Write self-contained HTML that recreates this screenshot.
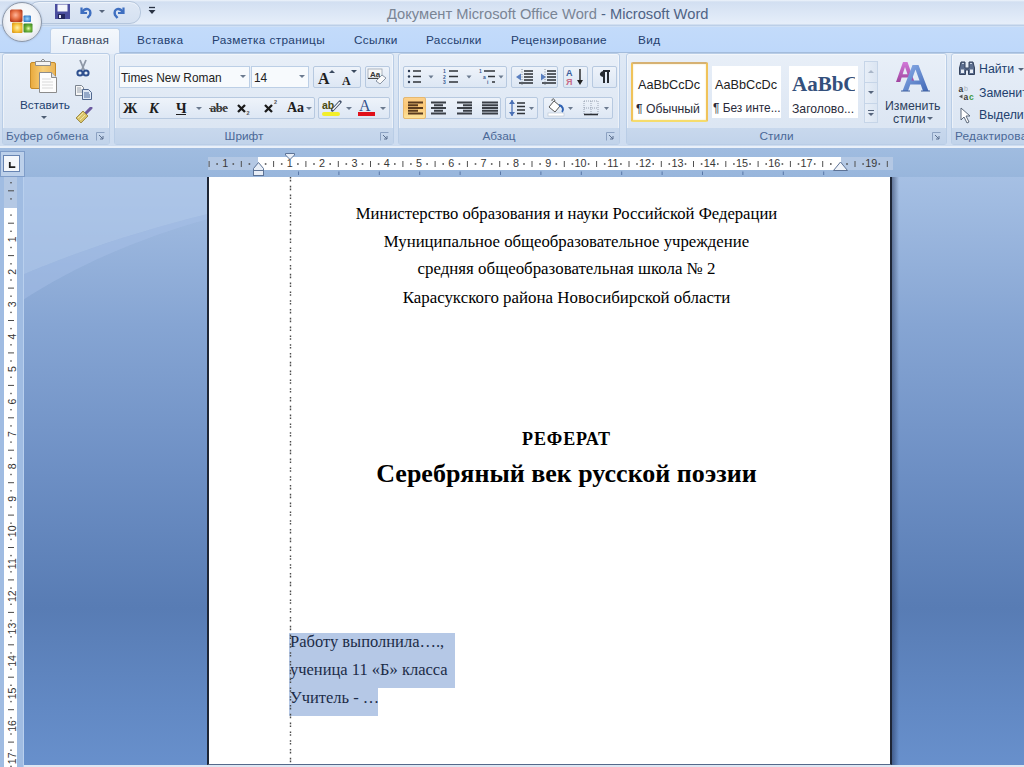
<!DOCTYPE html>
<html><head><meta charset="utf-8">
<style>
*{margin:0;padding:0;box-sizing:border-box}
html,body{width:1024px;height:767px;overflow:hidden;background:#6a8fc6}
body{position:relative;font-family:"Liberation Sans",sans-serif;font-size:12px;color:#15428b}
.a{position:absolute}
.t{position:absolute;white-space:nowrap;line-height:1}
/* title bar */
#title{left:0;top:0;width:1024px;height:26px;background:linear-gradient(#eef4fb 0,#d2dff1 2px,#d6e2f3 6px,#e4edf9 22px,#e6eef9 24px,#bccfe7 25px,#bccfe7 26px)}
#tabs{left:0;top:26px;width:1024px;height:27px;background:linear-gradient(#c3dbfa,#bed8fa);border-top:1px solid #cfe0f5;border-bottom:1px solid #a3bcdc}
#ribbon{left:0;top:53px;width:1024px;height:95px;background:linear-gradient(#dfe9f5,#cddcf0)}
.grp{position:absolute;top:53px;height:92px;border:1px solid #b9cde6;border-radius:3px;background:linear-gradient(#e8eff8 0%,#dfe8f4 60%,#d9e4f2 100%);box-shadow:inset 0 0 0 1px rgba(255,255,255,0.45)}
.lbl{position:absolute;left:0;right:0;bottom:0;height:16px;background:linear-gradient(#c8d8ed,#c1d3ea)}
.lbl span{position:absolute;top:3px;width:100%;text-align:center;color:#4a6897;font-size:11.8px;line-height:1}
.btn{position:absolute;border:1px solid #b7c9e0;border-radius:2px;background:linear-gradient(#eef3fa,#dde7f4)}
#rulerrow{left:0;top:148px;width:1024px;height:29px;background:linear-gradient(#a0bce0,#98b6dc)}
#doc{left:20px;top:177px;width:1004px;height:590px;background:linear-gradient(#a6c0e4 0%,#86a5d3 25%,#6d8fc4 50%,#587cb4 73%,#6289c4 90%,#6890cc 100%)}
#page{left:207px;top:177px;width:685px;height:588px;background:#fff;border-left:2px solid #1e2636;border-right:2px solid #1e2636;border-bottom:1px solid #55698a}
.serif{font-family:"Liberation Serif",serif;color:#000}
</style></head><body>
<div id="doc" class="a"></div>
<svg class="a" style="left:20px;top:177px" width="188" height="200" viewBox="20 177 188 200">
 <path d="M20 177 H208 V214 C150 228 80 250 20 276 Z" fill="#b2c9eb" opacity="0.6"/>
 <path d="M20 276 C80 250 150 228 208 214 V219 C150 235 80 262 20 302 Z" fill="#a8c2e8" opacity="0.45"/>
</svg>
<div class="a" style="left:892px;top:177px;width:7px;height:588px;background:linear-gradient(90deg,rgba(30,45,80,0.5),rgba(30,45,80,0))"></div>
<div class="a" style="left:0;top:765px;width:1024px;height:2px;background:#dde7f3"></div>

<div id="title" class="a"></div>
<div class="t" style="left:387px;top:7px;font-size:14.7px;color:#7a8595">Документ Microsoft Office Word <span style="color:#4f6385">- Microsoft Word</span></div>
<div id="tabs" class="a"></div>
<div id="ribbon" class="a"></div>

<!-- QAT -->
<div class="a" style="left:28px;top:1px;width:113px;height:23px;border-radius:11px;background:linear-gradient(#dfe8f5,#d5e1f1);border:1px solid #b5c6dc;box-shadow:inset 0 1px 0 #eef3fa"></div>
<svg class="a" style="left:54px;top:3px" width="17" height="17" viewBox="0 0 17 17">
 <path d="M1 1h15v15h-15z" fill="#4a4d9e"/>
 <rect x="3.5" y="1.5" width="10" height="7" fill="#f4f6fb"/>
 <rect x="4" y="11" width="7" height="5" fill="#23265e"/><rect x="5" y="12" width="2" height="3" fill="#e6e8f5"/>
</svg>
<svg class="a" style="left:78px;top:5px" width="15" height="14" viewBox="0 0 15 14">
 <path d="M3.5 2.5 v5.5 h5.5" fill="none" stroke="#3f6fc0" stroke-width="2.2"/>
 <path d="M4 7.5 C7 2 14 3 12 10 L9.5 13" fill="none" stroke="#3f6fc0" stroke-width="2.4"/>
</svg>
<svg class="a" style="left:99px;top:10px" width="6" height="4"><path d="M0 0h6l-3 3z" fill="#56657c"/></svg>
<svg class="a" style="left:112px;top:5px" width="15" height="14" viewBox="0 0 15 14">
 <path d="M11.5 2.5 v5.5 h-5.5" fill="none" stroke="#3f6fc0" stroke-width="2.2"/>
 <path d="M11 7.5 C8 2 1 3 3 10 L5.5 13" fill="none" stroke="#3f6fc0" stroke-width="2.4"/>
</svg>
<svg class="a" style="left:148px;top:6px" width="8" height="9"><path d="M1 1.5h6" stroke="#2a3344" stroke-width="1.3"/><path d="M0.5 4h7l-3.5 4z" fill="#2a3344"/></svg>

<!-- office button -->
<div class="a" style="left:2px;top:2px;width:40px;height:40px;border-radius:50%;background:radial-gradient(circle at 50% 45%,#ffffff 0%,#f2f4f8 55%,#d5dbe4 85%,#b8c1ce 100%);border:1.5px solid #8c97a8;box-shadow:0 0 2px #9eb4d4"></div>
<svg class="a" style="left:9px;top:9px" width="26" height="26" viewBox="0 0 26 26">
 <defs>
  <radialGradient id="or" cx="0.45" cy="0.45" r="0.6"><stop offset="0" stop-color="#ffb59a"/><stop offset="0.6" stop-color="#e36b3f"/><stop offset="1" stop-color="#b33a1e"/></radialGradient>
  <radialGradient id="oy" cx="0.5" cy="0.5" r="0.6"><stop offset="0" stop-color="#fff2b0"/><stop offset="0.6" stop-color="#f5c13a"/><stop offset="1" stop-color="#dc9a1a"/></radialGradient>
  <radialGradient id="og" cx="0.55" cy="0.55" r="0.6"><stop offset="0" stop-color="#e8ffb0"/><stop offset="0.5" stop-color="#6fb33a"/><stop offset="1" stop-color="#3f8a24"/></radialGradient>
  <radialGradient id="ob" cx="0.5" cy="0.5" r="0.6"><stop offset="0" stop-color="#9ad6ff"/><stop offset="1" stop-color="#2a71c0"/></radialGradient>
 </defs>
 <rect x="1" y="0.5" width="12.5" height="12.5" rx="1.5" fill="url(#or)"/>
 <rect x="14.5" y="6.5" width="7.5" height="6.5" rx="1" fill="url(#ob)"/>
 <rect x="3" y="13.5" width="10.5" height="10.5" rx="1" fill="url(#oy)"/>
 <rect x="14.5" y="14.5" width="9" height="9" rx="1" fill="url(#og)"/>
</svg>

<!-- tabs -->
<div class="a" style="left:50px;top:28px;width:70px;height:26px;border:1px solid #bcd0ea;border-bottom:none;border-radius:3px 3px 0 0;background:linear-gradient(#f4f8fc,#e8eff9)"></div>
<div class="t" style="left:62px;top:35px;font-size:11.8px;letter-spacing:0.35px;color:#34445c">Главная</div>
<div class="t" style="left:137px;top:35px;font-size:11.8px;letter-spacing:0.35px;color:#24406e">Вставка</div>
<div class="t" style="left:212px;top:35px;font-size:11.8px;letter-spacing:0.35px;color:#24406e">Разметка страницы</div>
<div class="t" style="left:354px;top:35px;font-size:11.8px;letter-spacing:0.35px;color:#24406e">Ссылки</div>
<div class="t" style="left:426px;top:35px;font-size:11.8px;letter-spacing:0.35px;color:#24406e">Рассылки</div>
<div class="t" style="left:511px;top:35px;font-size:11.8px;letter-spacing:0.35px;color:#24406e">Рецензирование</div>
<div class="t" style="left:638px;top:35px;font-size:11.8px;letter-spacing:0.35px;color:#24406e">Вид</div>

<!-- groups -->
<div class="grp" style="left:2px;width:108px"><div class="lbl"><span style="text-align:left;left:3px;letter-spacing:0.2px">Буфер обмена</span></div></div>
<div class="grp" style="left:114px;width:280px"><div class="lbl"><span style="width:auto;left:0;right:20px">Шрифт</span></div></div>
<div class="grp" style="left:398px;width:222px"><div class="lbl"><span style="width:auto;left:0;right:20px">Абзац</span></div></div>
<div class="grp" style="left:626px;width:321px"><div class="lbl"><span style="width:auto;left:0;right:20px">Стили</span></div></div>
<div class="grp" style="left:951px;width:80px"><div class="lbl"><span style="text-align:left;left:3px;letter-spacing:0.2px">Редактирование</span></div></div>


<!-- ===== Clipboard group contents ===== -->
<svg class="a" style="left:28px;top:58px" width="32" height="36" viewBox="0 0 32 36">
 <defs><linearGradient id="gb" x1="0" y1="0" x2="1" y2="0"><stop offset="0" stop-color="#e9a93c"/><stop offset="0.5" stop-color="#f7cf7a"/><stop offset="1" stop-color="#eab456"/></linearGradient></defs>
 <rect x="2.5" y="4.5" width="25" height="26" rx="1.5" fill="url(#gb)" stroke="#c58b2a" stroke-width="1"/>
 <path d="M7.5 3.5 h15 v4 h-15z" fill="#f4f4f4" stroke="#8f8f8f"/>
 <path d="M12.5 3.5 l2.5 -2.5 l2.5 2.5" fill="none" stroke="#8f8f8f"/>
 <path d="M11.5 14.5 h12 l5 5 v15 h-17z" fill="#fdfdfd" stroke="#8c8c8c"/>
 <path d="M23.5 14.5 v5 h5" fill="#e2e2e2" stroke="#8c8c8c"/>
 <path d="M14 21h9M14 24h11M14 27h11M14 30h11" stroke="#d9d9d9" stroke-width="1"/>
</svg>
<div class="t" style="left:20px;top:100px;font-size:11.8px;color:#22416f">Вставить</div>
<svg class="a" style="left:41px;top:116px" width="6" height="4"><path d="M0 0h6l-3 3z" fill="#4d5d73"/></svg>
<svg class="a" style="left:76px;top:59px" width="14" height="18" viewBox="0 0 14 18">
 <path d="M4 1 L8.2 11 M10 1 L5.8 11" stroke="#8d97a6" stroke-width="1.8"/>
 <circle cx="4" cy="14" r="2.6" fill="none" stroke="#2d4f8e" stroke-width="2"/>
 <circle cx="10" cy="14" r="2.6" fill="none" stroke="#2d4f8e" stroke-width="2"/>
</svg>
<svg class="a" style="left:74px;top:84px" width="19" height="16" viewBox="0 0 19 16">
 <path d="M1.5 1.5h6l2 2v8h-8z" fill="#f5f5f5" stroke="#7b8490"/>
 <path d="M3 4h4M3 6h5M3 8h5" stroke="#9aa4b0"/>
 <path d="M8.5 5.5h6l3 3v7h-9z" fill="#dfe8f5" stroke="#51688f"/>
 <path d="M10 9h5M10 11h6M10 13h6" stroke="#4b6a9d"/>
</svg>
<svg class="a" style="left:75px;top:107px" width="18" height="17" viewBox="0 0 18 17">
 <path d="M11 6 L16 1" stroke="#6c5aa0" stroke-width="3" stroke-linecap="round"/>
 <path d="M1 11 L8 4 L13 9 L6 16 Z" fill="#d9c46a" stroke="#8f7a2e" stroke-width="0.8"/>
 <path d="M3 11 L8 6 M5 13 L10 8" stroke="#f3e7a5" stroke-width="1"/>
</svg>
<svg class="a" style="left:96px;top:132px" width="9" height="9" viewBox="0 0 9 9"><path d="M0.5 8.5v-8h8" fill="none" stroke="#8ca2c2"/><path d="M3 3l4 4M7 4v3h-3" fill="none" stroke="#5a6f8e"/></svg>

<!-- ===== Font group contents ===== -->
<div class="a" style="left:119px;top:66px;width:131px;height:22px;background:#f7fafd;border:1px solid #bccfe6"></div>
<div class="t" style="left:121px;top:72.5px;font-size:11.9px;color:#222">Times New Roman</div>
<svg class="a" style="left:240px;top:75px" width="6" height="4"><path d="M0 0h6l-3 3z" fill="#6b7a8f"/></svg>
<div class="a" style="left:251px;top:66px;width:58px;height:22px;background:#f7fafd;border:1px solid #bccfe6"></div>
<div class="t" style="left:254px;top:72.5px;font-size:11.9px;color:#222">14</div>
<svg class="a" style="left:299px;top:75px" width="6" height="4"><path d="M0 0h6l-3 3z" fill="#6b7a8f"/></svg>
<div class="btn" style="left:313px;top:66px;width:48px;height:22px"></div>
<div class="t serif" style="left:318px;top:71px;font-size:16px;font-weight:bold;color:#202020">A</div>
<svg class="a" style="left:329px;top:70px" width="6" height="4"><path d="M0 3h6l-3-3z" fill="#3b4a5f"/></svg>
<div class="t serif" style="left:342px;top:75px;font-size:12px;font-weight:bold;color:#202020">A</div>
<svg class="a" style="left:351px;top:70px" width="6" height="4"><path d="M0 0h6l-3 3z" fill="#3b4a5f"/></svg>
<div class="btn" style="left:365px;top:66px;width:25px;height:22px"></div>
<svg class="a" style="left:367px;top:68px" width="20" height="18" viewBox="0 0 20 18">
 <rect x="1" y="1" width="14" height="9" fill="#f8f8f8" stroke="#9aa4b0" stroke-width="0.8"/>
 <text x="3" y="8.5" font-family="Liberation Sans" font-size="8" font-weight="bold" fill="#333">Aa</text>
 <path d="M1 10.5h12" stroke="#444"/>
 <path d="M9 13 L15 7 L19 10 L13 16 Z" fill="#fafafa" stroke="#8a95a5"/>
</svg>
<div class="btn" style="left:119px;top:97px;width:196px;height:22px"></div>
<div class="t serif" style="left:123px;top:101px;font-size:14.5px;font-weight:bold;color:#1e1e1e">Ж</div>
<div class="t serif" style="left:149px;top:101px;font-size:14.5px;font-weight:bold;font-style:italic;color:#1e1e1e">К</div>
<div class="t serif" style="left:176px;top:101px;font-size:14.5px;font-weight:bold;color:#1e1e1e">Ч</div>
<div class="a" style="left:176px;top:114px;width:10px;height:1px;background:#1e1e1e"></div>
<svg class="a" style="left:196px;top:107px" width="6" height="4"><path d="M0 0h6l-3 3z" fill="#6b7a8f"/></svg>
<div class="t serif" style="left:210px;top:102px;font-size:12.5px;font-weight:bold;color:#333;letter-spacing:-0.5px">abe</div>
<div class="a" style="left:209px;top:108px;width:19px;height:1px;background:#555"></div>
<svg class="a" style="left:236px;top:98px" width="44" height="20" viewBox="0 0 44 20">
 <path d="M2 7 L9 14 M9 7 L2 14" stroke="#1a1a1a" stroke-width="2.3"/>
 <text x="10.5" y="16.5" font-family="Liberation Sans" font-size="5.5" font-weight="bold" fill="#555">2</text>
 <path d="M29 7 L36 14 M36 7 L29 14" stroke="#1a1a1a" stroke-width="2.3"/>
 <text x="38" y="5.5" font-family="Liberation Sans" font-size="5.5" font-weight="bold" fill="#555">2</text>
</svg>
<div class="t serif" style="left:287px;top:101px;font-size:14px;font-weight:bold;color:#202020">Aa</div>
<svg class="a" style="left:306px;top:107px" width="6" height="4"><path d="M0 0h6l-3 3z" fill="#6b7a8f"/></svg>
<div class="btn" style="left:318px;top:97px;width:72px;height:22px"></div>
<div class="a" style="left:322px;top:112px;width:18px;height:4px;background:#f2ee2a;border-radius:2px"></div>
<div class="t" style="left:322px;top:100px;font-size:10.5px;font-weight:bold;color:#4a4a10">ab</div>
<svg class="a" style="left:330px;top:99px" width="12" height="14"><path d="M2.5 11 L10 3" stroke="#3d4c66" stroke-width="3.2" stroke-linecap="round"/><path d="M3 10.5 L9.5 3.5" stroke="#f4f7fb" stroke-width="1.4" stroke-linecap="round"/></svg>
<svg class="a" style="left:346px;top:107px" width="6" height="4"><path d="M0 0h6l-3 3z" fill="#6b7a8f"/></svg>
<div class="t serif" style="left:359px;top:98px;font-size:16px;color:#34528a">A</div>
<div class="a" style="left:358px;top:112px;width:17px;height:4px;background:#e0101a"></div>
<svg class="a" style="left:380px;top:107px" width="6" height="4"><path d="M0 0h6l-3 3z" fill="#6b7a8f"/></svg>
<svg class="a" style="left:380px;top:132px" width="9" height="9" viewBox="0 0 9 9"><path d="M0.5 8.5v-8h8" fill="none" stroke="#8ca2c2"/><path d="M3 3l4 4M7 4v3h-3" fill="none" stroke="#5a6f8e"/></svg>


<!-- ===== Paragraph group ===== -->
<div class="btn" style="left:403px;top:66px;width:104px;height:22px"></div>
<svg class="a" style="left:403px;top:66px" width="104" height="22" viewBox="0 0 104 22">
 <g fill="#2b3a52"><circle cx="6" cy="5" r="1.2"/><circle cx="6" cy="10.5" r="1.2"/><circle cx="6" cy="16" r="1.2"/></g>
 <g stroke="#2f3338" stroke-width="1.6"><path d="M10 5h8M10 10.5h8M10 16h8"/></g>
 <path d="M25.5 9.5h5l-2.5 3z" fill="#6b7a8f"/>
 <g fill="#3a5a92" font-family="Liberation Sans" font-size="5" font-weight="bold"><text x="40" y="7">1</text><text x="40" y="12.5">2</text><text x="40" y="18">3</text></g>
 <g stroke="#2f3338" stroke-width="1.6"><path d="M46 5h9M46 10.5h9M46 16h9"/></g>
 <path d="M63.5 9.5h5l-2.5 3z" fill="#6b7a8f"/>
 <g fill="#3a5a92" font-family="Liberation Sans" font-size="5" font-weight="bold"><text x="76" y="7">1</text><text x="80" y="12.5">a</text><text x="84" y="18">i</text></g>
 <g stroke="#2f3338" stroke-width="1.6"><path d="M81 5h11M85 10.5h7M89 16h3"/></g>
 <path d="M95.5 9.5h5l-2.5 3z" fill="#6b7a8f"/>
</svg>
<div class="btn" style="left:511px;top:66px;width:47px;height:22px"></div>
<svg class="a" style="left:511px;top:66px" width="47" height="22" viewBox="0 0 47 22">
 <g stroke="#2a2e33" stroke-width="1.5"><path d="M13 5h9M13 8h9M13 11h9M13 14h9M8 17h14"/><path d="M36 5h9M36 8h9M36 11h9M36 14h9M31 17h14"/></g>
 <path d="M5 11 L10 7.5 V14.5Z" fill="#5a7fc0"/>
 <path d="M35 11 L30 7.5 V14.5Z" fill="#5a7fc0"/>
 <path d="M11 3v17M34 3v17" stroke="#6a7380" stroke-width="0.8" stroke-dasharray="1 1.5"/>
</svg>
<div class="btn" style="left:563px;top:66px;width:25px;height:22px"></div>
<svg class="a" style="left:563px;top:66px" width="25" height="22" viewBox="0 0 25 22">
 <text x="3" y="10" font-family="Liberation Sans" font-size="9" font-weight="bold" fill="#3b5d9c">A</text>
 <text x="3" y="19" font-family="Liberation Sans" font-size="9" font-weight="bold" fill="#c86a86">Я</text>
 <path d="M17 3v14" stroke="#222" stroke-width="1.4"/><path d="M14 14 L17 19 L20 14Z" fill="#222"/>
</svg>
<div class="btn" style="left:592px;top:66px;width:25px;height:22px"></div>
<svg class="a" style="left:592px;top:66px" width="25" height="22" viewBox="0 0 25 22">
 <path d="M11 5 H18 M12 5 V17 M16 5 V17" stroke="#262a30" stroke-width="2"/>
 <path d="M12 5 C7 5 6 11 12 11Z" fill="#262a30"/>
</svg>

<div class="btn" style="left:403px;top:97px;width:98px;height:22px"></div>
<div class="a" style="left:403px;top:97px;width:23px;height:22px;border:1px solid #e6b870;border-radius:2px;background:linear-gradient(#fcd08a,#fbc775 45%,#fde39b 100%)"></div>
<svg class="a" style="left:403px;top:97px" width="98" height="22" viewBox="0 0 98 22">
 <g stroke="#5a3b1e" stroke-width="2"><path d="M5 5.5h15M5 8.3h10M5 11h15M5 13.7h10M5 16.5h15"/></g>
 <g stroke="#3a3f46" stroke-width="2"><path d="M28 5.5h15M31 8.3h9M28 11h15M31 13.7h9M28 16.5h15"/><path d="M54 5.5h15M60 8.3h9M54 11h15M60 13.7h9M54 16.5h15"/><path d="M79 5.5h16M79 8.3h16M79 11h16M79 13.7h16M79 16.5h16"/></g>
</svg>
<div class="btn" style="left:505px;top:97px;width:33px;height:22px"></div>
<svg class="a" style="left:505px;top:97px" width="33" height="22" viewBox="0 0 33 22">
 <path d="M7 3v16" stroke="#4a70b5" stroke-width="1.3"/><path d="M4 7 L7 3 L10 7Z M4 15 L7 19 L10 15Z" fill="#4a70b5"/>
 <g stroke="#2f3338" stroke-width="1.6"><path d="M12 6h8M12 9.5h8M12 13h8M12 16.5h8"/></g>
 <path d="M24 10h5l-2.5 3z" fill="#6b7a8f"/>
</svg>
<div class="btn" style="left:543px;top:97px;width:70px;height:22px"></div>
<svg class="a" style="left:543px;top:97px" width="70" height="22" viewBox="0 0 70 22">
 <path d="M6 10 L11 4 L17 9 L12 15Z" fill="#fff" stroke="#555" stroke-width="1"/>
 <path d="M16 8 C20 9 21 13 19 15" stroke="#2f62b3" stroke-width="2" fill="none"/>
 <path d="M12 4 C11 1 9 1 9 4" stroke="#555" fill="none"/>
 <rect x="5" y="16" width="16" height="3" fill="#fff" stroke="#b7c2cf" stroke-width="0.6"/>
 <path d="M25 10h5l-2.5 3z" fill="#6b7a8f"/>
 <g stroke="#8592a3" stroke-width="0.8" stroke-dasharray="1 1"><path d="M41 4h14M41 11h14M41 4v13M48 4v13M55 4v13"/></g>
 <path d="M41 17.5h14" stroke="#2a2e33" stroke-width="1.6"/>
 <path d="M61 10h5l-2.5 3z" fill="#6b7a8f"/>
</svg>
<svg class="a" style="left:606px;top:132px" width="9" height="9" viewBox="0 0 9 9"><path d="M0.5 8.5v-8h8" fill="none" stroke="#8ca2c2"/><path d="M3 3l4 4M7 4v3h-3" fill="none" stroke="#5a6f8e"/></svg>


<!-- ===== Styles group ===== -->
<div class="a" style="left:631px;top:62px;width:77px;height:60px;border:2px solid #f0c35a;border-top-color:#d6b172;border-bottom-color:#f6dc6c;border-radius:2px;background:#fff;box-shadow:inset 0 0 2px #f8e2a8"></div>
<div class="a" style="left:633px;top:64px;width:68px;height:50px;overflow:hidden">
<div class="t" style="left:5px;top:15px;font-size:12.7px;color:#222">AaBbCcDc</div>
<div class="t" style="left:3px;top:39px;font-size:12.2px;color:#2a2a3a">¶ Обычный</div>
</div>
<div class="a" style="left:712px;top:66px;width:69px;height:52px;background:#fff"></div>
<div class="a" style="left:712px;top:66px;width:68px;height:50px;overflow:hidden">
<div class="t" style="left:3px;top:13px;font-size:12.7px;color:#222">AaBbCcDc</div>
<div class="t" style="left:1px;top:37px;font-size:11.9px;color:#2a2a3a">¶ Без инте...</div>
</div>
<div class="a" style="left:789px;top:66px;width:69px;height:52px;background:#fff"></div>
<div class="a" style="left:789px;top:66px;width:66px;height:50px;overflow:hidden">
<div class="t serif" style="left:3px;top:8px;font-size:21px;font-weight:bold;color:#34507c">AaBbCc</div>
<div class="t" style="left:3px;top:37px;font-size:12.2px;color:#2a2a3a">Заголово...</div>
</div>
<div class="a" style="left:864px;top:61px;width:14px;height:62px;border:1px solid #c6d5e8;background:linear-gradient(90deg,#e7eef7,#dbe5f2)"></div>
<div class="a" style="left:864px;top:82px;width:14px;height:1px;background:#c6d5e8"></div>
<div class="a" style="left:864px;top:103px;width:14px;height:1px;background:#c6d5e8"></div>
<svg class="a" style="left:868px;top:70px" width="6" height="4"><path d="M0 3h6l-3-3z" fill="#a9b6c8"/></svg>
<svg class="a" style="left:868px;top:91px" width="6" height="4"><path d="M0 0h6l-3 3z" fill="#56657c"/></svg>
<svg class="a" style="left:868px;top:110px" width="6" height="7"><path d="M0 0.5h6" stroke="#56657c"/><path d="M0 3h6l-3 3z" fill="#56657c"/></svg>
<svg class="a" style="left:894px;top:60px" width="36" height="34" viewBox="894 60 36 34">
 <defs><linearGradient id="gm" x1="0" y1="0" x2="0" y2="1"><stop offset="0" stop-color="#d27ad8"/><stop offset="1" stop-color="#a0449f"/></linearGradient>
 <linearGradient id="gbl" x1="0" y1="0" x2="1" y2="1"><stop offset="0" stop-color="#8db0ea"/><stop offset="1" stop-color="#4168b5"/></linearGradient></defs>
 <path d="M896 82 L903 62 L907.5 62 L914.5 82 L910 82 L908.6 77.5 L901.6 77.5 L900.3 82 Z M902.6 74.3 L907.5 74.3 L905 67 Z" fill="url(#gm)" fill-rule="evenodd"/>
 <path d="M902.5 91 L912.5 65 L918.5 65 L928.5 91 L923 91 L920.7 84.5 L910.3 84.5 L908 91 Z M911.5 80.5 L919.5 80.5 L915.5 69.5 Z" fill="url(#gbl)" fill-rule="evenodd"/>
 <path d="M901 91h9M921 91h9" stroke="#3d5e9e" stroke-width="1"/>
</svg>
<div class="t" style="left:885px;top:100px;font-size:12.3px;color:#2c3e5c">Изменить</div>
<div class="t" style="left:893px;top:113px;font-size:12.3px;color:#2c3e5c">стили</div>
<svg class="a" style="left:927px;top:117px" width="6" height="4"><path d="M0 0h6l-3 3z" fill="#56657c"/></svg>
<svg class="a" style="left:932px;top:132px" width="9" height="9" viewBox="0 0 9 9"><path d="M0.5 8.5v-8h8" fill="none" stroke="#8ca2c2"/><path d="M3 3l4 4M7 4v3h-3" fill="none" stroke="#5a6f8e"/></svg>

<!-- ===== Editing group ===== -->
<svg class="a" style="left:958px;top:60px" width="18" height="16" viewBox="0 0 18 16">
 <path d="M1.5 8 L3 2 H7 V8 H11 V2 H15 L16.5 8 V14.5 H10.5 V10 H7.5 V14.5 H1.5Z" fill="#5d6f8f" stroke="#34425c" stroke-width="1"/>
 <rect x="3" y="9.5" width="3" height="3.5" fill="#e9eef6"/><rect x="12" y="9.5" width="3" height="3.5" fill="#e9eef6"/>
 <path d="M4 3.5h2M12 3.5h2" stroke="#c9d3e3"/>
</svg>
<div class="t" style="left:979px;top:63px;font-size:12.3px;color:#22406e">Найти</div>
<svg class="a" style="left:1018px;top:68px" width="6" height="4"><path d="M0 0h6l-3 3z" fill="#56657c"/></svg>
<svg class="a" style="left:958px;top:84px" width="20" height="17" viewBox="0 0 20 17">
 <text x="0.5" y="8" font-family="Liberation Sans" font-size="8.5" font-weight="bold" fill="#3a3a3a">a</text>
 <text x="6" y="7" font-family="Liberation Sans" font-size="7" fill="#a8b0bb">b</text>
 <text x="5.5" y="15.5" font-family="Liberation Sans" font-size="8.5" font-weight="bold" fill="#3a3a3a">a</text>
 <text x="11" y="15.5" font-family="Liberation Sans" font-size="8.5" font-weight="bold" fill="#3f9a3f">c</text>
 <path d="M1 12.5 l3.5-2 v4z" fill="#555"/>
</svg>
<div class="t" style="left:979px;top:87px;font-size:12.3px;color:#22406e">Заменить</div>
<svg class="a" style="left:960px;top:107px" width="12" height="17" viewBox="0 0 12 17">
 <path d="M1 1 L1 13 L4 10 L7 16 L9 15 L6 9 L10 9Z" fill="#fff" stroke="#4d5a6d" stroke-width="0.9"/>
</svg>
<div class="t" style="left:979px;top:109px;font-size:12.3px;color:#22406e">Выделить</div>

<div id="rulerrow" class="a"></div>
<!-- ===== Rulers ===== -->
<div class="a" style="left:0;top:146px;width:1024px;height:2px;background:#e9f0f9"></div>
<div class="a" style="left:0;top:151px;width:25px;height:26px;border:1px solid #7f9dc9;background:#bcd0ea"></div>
<div class="a" style="left:3px;top:155px;width:17px;height:17px;border:1px solid #6784b2;background:#f4f7fb"></div>
<svg class="a" style="left:8px;top:161px" width="8" height="8"><path d="M1.8 1v5.2h5.5" fill="none" stroke="#1e1e1e" stroke-width="1.8"/></svg>
<div class="a" style="left:208px;top:157px;width:682px;height:13px;background:#fff"></div>
<div class="a" style="left:208px;top:157px;width:50px;height:13px;background:#b4c8e4"></div>
<div class="a" style="left:841px;top:157px;width:52px;height:13px;background:#b4c8e4"></div>
<svg class="a" style="left:0;top:150px" width="1024" height="28" viewBox="0 0 1024 28">
<rect x="208.6" y="11" width="1" height="6" fill="#505050"/>
<rect x="216.3" y="13.2" width="1.6" height="1.6" fill="#505050"/>
<text x="225.2" y="17.3" text-anchor="middle" font-family="Liberation Sans" font-size="10.8" fill="#383838">1</text>
<rect x="232.5" y="13.2" width="1.6" height="1.6" fill="#505050"/>
<rect x="240.8" y="11" width="1" height="6" fill="#505050"/>
<rect x="248.6" y="13.2" width="1.6" height="1.6" fill="#505050"/>
<rect x="264.8" y="13.2" width="1.6" height="1.6" fill="#505050"/>
<rect x="273.1" y="11" width="1" height="6" fill="#505050"/>
<rect x="280.9" y="13.2" width="1.6" height="1.6" fill="#505050"/>
<text x="289.8" y="17.3" text-anchor="middle" font-family="Liberation Sans" font-size="10.8" fill="#383838">1</text>
<rect x="297.1" y="13.2" width="1.6" height="1.6" fill="#505050"/>
<rect x="305.4" y="11" width="1" height="6" fill="#505050"/>
<rect x="313.2" y="13.2" width="1.6" height="1.6" fill="#505050"/>
<text x="322.1" y="17.3" text-anchor="middle" font-family="Liberation Sans" font-size="10.8" fill="#383838">2</text>
<rect x="329.4" y="13.2" width="1.6" height="1.6" fill="#505050"/>
<rect x="337.8" y="11" width="1" height="6" fill="#505050"/>
<rect x="345.5" y="13.2" width="1.6" height="1.6" fill="#505050"/>
<text x="354.4" y="17.3" text-anchor="middle" font-family="Liberation Sans" font-size="10.8" fill="#383838">3</text>
<rect x="361.7" y="13.2" width="1.6" height="1.6" fill="#505050"/>
<rect x="370.0" y="11" width="1" height="6" fill="#505050"/>
<rect x="377.8" y="13.2" width="1.6" height="1.6" fill="#505050"/>
<text x="386.7" y="17.3" text-anchor="middle" font-family="Liberation Sans" font-size="10.8" fill="#383838">4</text>
<rect x="394.0" y="13.2" width="1.6" height="1.6" fill="#505050"/>
<rect x="402.4" y="11" width="1" height="6" fill="#505050"/>
<rect x="410.1" y="13.2" width="1.6" height="1.6" fill="#505050"/>
<text x="419.0" y="17.3" text-anchor="middle" font-family="Liberation Sans" font-size="10.8" fill="#383838">5</text>
<rect x="426.3" y="13.2" width="1.6" height="1.6" fill="#505050"/>
<rect x="434.6" y="11" width="1" height="6" fill="#505050"/>
<rect x="442.4" y="13.2" width="1.6" height="1.6" fill="#505050"/>
<text x="451.3" y="17.3" text-anchor="middle" font-family="Liberation Sans" font-size="10.8" fill="#383838">6</text>
<rect x="458.6" y="13.2" width="1.6" height="1.6" fill="#505050"/>
<rect x="466.9" y="11" width="1" height="6" fill="#505050"/>
<rect x="474.7" y="13.2" width="1.6" height="1.6" fill="#505050"/>
<text x="483.6" y="17.3" text-anchor="middle" font-family="Liberation Sans" font-size="10.8" fill="#383838">7</text>
<rect x="490.9" y="13.2" width="1.6" height="1.6" fill="#505050"/>
<rect x="499.2" y="11" width="1" height="6" fill="#505050"/>
<rect x="507.0" y="13.2" width="1.6" height="1.6" fill="#505050"/>
<text x="515.9" y="17.3" text-anchor="middle" font-family="Liberation Sans" font-size="10.8" fill="#383838">8</text>
<rect x="523.2" y="13.2" width="1.6" height="1.6" fill="#505050"/>
<rect x="531.5" y="11" width="1" height="6" fill="#505050"/>
<rect x="539.3" y="13.2" width="1.6" height="1.6" fill="#505050"/>
<text x="548.2" y="17.3" text-anchor="middle" font-family="Liberation Sans" font-size="10.8" fill="#383838">9</text>
<rect x="555.5" y="13.2" width="1.6" height="1.6" fill="#505050"/>
<rect x="563.8" y="11" width="1" height="6" fill="#505050"/>
<rect x="571.6" y="13.2" width="1.6" height="1.6" fill="#505050"/>
<text x="580.5" y="17.3" text-anchor="middle" font-family="Liberation Sans" font-size="10.8" fill="#383838">10</text>
<rect x="587.8" y="13.2" width="1.6" height="1.6" fill="#505050"/>
<rect x="596.1" y="11" width="1" height="6" fill="#505050"/>
<rect x="603.9" y="13.2" width="1.6" height="1.6" fill="#505050"/>
<text x="612.8" y="17.3" text-anchor="middle" font-family="Liberation Sans" font-size="10.8" fill="#383838">11</text>
<rect x="620.1" y="13.2" width="1.6" height="1.6" fill="#505050"/>
<rect x="628.5" y="11" width="1" height="6" fill="#505050"/>
<rect x="636.2" y="13.2" width="1.6" height="1.6" fill="#505050"/>
<text x="645.1" y="17.3" text-anchor="middle" font-family="Liberation Sans" font-size="10.8" fill="#383838">12</text>
<rect x="652.4" y="13.2" width="1.6" height="1.6" fill="#505050"/>
<rect x="660.8" y="11" width="1" height="6" fill="#505050"/>
<rect x="668.5" y="13.2" width="1.6" height="1.6" fill="#505050"/>
<text x="677.4" y="17.3" text-anchor="middle" font-family="Liberation Sans" font-size="10.8" fill="#383838">13</text>
<rect x="684.7" y="13.2" width="1.6" height="1.6" fill="#505050"/>
<rect x="693.0" y="11" width="1" height="6" fill="#505050"/>
<rect x="700.8" y="13.2" width="1.6" height="1.6" fill="#505050"/>
<text x="709.7" y="17.3" text-anchor="middle" font-family="Liberation Sans" font-size="10.8" fill="#383838">14</text>
<rect x="717.0" y="13.2" width="1.6" height="1.6" fill="#505050"/>
<rect x="725.3" y="11" width="1" height="6" fill="#505050"/>
<rect x="733.1" y="13.2" width="1.6" height="1.6" fill="#505050"/>
<text x="742.0" y="17.3" text-anchor="middle" font-family="Liberation Sans" font-size="10.8" fill="#383838">15</text>
<rect x="749.3" y="13.2" width="1.6" height="1.6" fill="#505050"/>
<rect x="757.6" y="11" width="1" height="6" fill="#505050"/>
<rect x="765.4" y="13.2" width="1.6" height="1.6" fill="#505050"/>
<text x="774.3" y="17.3" text-anchor="middle" font-family="Liberation Sans" font-size="10.8" fill="#383838">16</text>
<rect x="781.6" y="13.2" width="1.6" height="1.6" fill="#505050"/>
<rect x="789.9" y="11" width="1" height="6" fill="#505050"/>
<rect x="797.7" y="13.2" width="1.6" height="1.6" fill="#505050"/>
<text x="806.6" y="17.3" text-anchor="middle" font-family="Liberation Sans" font-size="10.8" fill="#383838">17</text>
<rect x="813.9" y="13.2" width="1.6" height="1.6" fill="#505050"/>
<rect x="822.2" y="11" width="1" height="6" fill="#505050"/>
<rect x="830.0" y="13.2" width="1.6" height="1.6" fill="#505050"/>
<rect x="846.2" y="13.2" width="1.6" height="1.6" fill="#505050"/>
<rect x="854.5" y="11" width="1" height="6" fill="#505050"/>
<rect x="862.3" y="13.2" width="1.6" height="1.6" fill="#505050"/>
<text x="871.2" y="17.3" text-anchor="middle" font-family="Liberation Sans" font-size="10.8" fill="#383838">19</text>
<rect x="878.5" y="13.2" width="1.6" height="1.6" fill="#505050"/>
<rect x="886.8" y="11" width="1" height="6" fill="#505050"/>
<rect x="298.0" y="21.5" width="1" height="3.5" fill="#5a78a8"/>
<rect x="338.4" y="21.5" width="1" height="3.5" fill="#5a78a8"/>
<rect x="378.8" y="21.5" width="1" height="3.5" fill="#5a78a8"/>
<rect x="419.2" y="21.5" width="1" height="3.5" fill="#5a78a8"/>
<rect x="459.6" y="21.5" width="1" height="3.5" fill="#5a78a8"/>
<rect x="500.0" y="21.5" width="1" height="3.5" fill="#5a78a8"/>
<rect x="540.4" y="21.5" width="1" height="3.5" fill="#5a78a8"/>
<rect x="580.8" y="21.5" width="1" height="3.5" fill="#5a78a8"/>
<rect x="621.2" y="21.5" width="1" height="3.5" fill="#5a78a8"/>
<rect x="661.6" y="21.5" width="1" height="3.5" fill="#5a78a8"/>
<rect x="702.0" y="21.5" width="1" height="3.5" fill="#5a78a8"/>
<rect x="742.4" y="21.5" width="1" height="3.5" fill="#5a78a8"/>
<rect x="782.8" y="21.5" width="1" height="3.5" fill="#5a78a8"/>
<rect x="823.2" y="21.5" width="1" height="3.5" fill="#5a78a8"/>
</svg>
<svg class="a" style="left:252px;top:161px" width="13" height="16" viewBox="0 0 13 16"><path d="M1.5 7.5 L6.5 1.5 L11.5 7.5 V9.5 H1.5Z" fill="#e8eef7" stroke="#5d7396"/><rect x="1.5" y="9.5" width="10" height="5" fill="#e8eef7" stroke="#5d7396"/></svg>
<svg class="a" style="left:284px;top:153px" width="12" height="8" viewBox="0 0 12 8"><path d="M1.5 0.5 H10.5 V2 L6 6.5 L1.5 2Z" fill="#e8eef7" stroke="#5d7396"/></svg>
<svg class="a" style="left:832px;top:160px" width="17" height="12" viewBox="0 0 17 12"><path d="M1.5 10.5 L8.5 2 L15.5 10.5Z" fill="#f2f5fa" stroke="#5d7396"/></svg>
<div class="a" style="left:0;top:177px;width:24px;height:590px;background:#a0bce2;border-right:1px solid #b9d0ee"></div>
<div class="a" style="left:4px;top:177px;width:13px;height:590px;background:#fff"></div>
<div class="a" style="left:4px;top:177px;width:13px;height:31px;background:#b4c8e4"></div>
<svg class="a" style="left:0;top:177px" width="21" height="590" viewBox="0 177 21 590">
<rect x="10.3" y="182.0" width="1.4" height="1.4" fill="#4a4a4a"/>
<rect x="8" y="190.3" width="6" height="1" fill="#4a4a4a"/>
<rect x="10.3" y="198.2" width="1.4" height="1.4" fill="#4a4a4a"/>
<rect x="10.3" y="214.4" width="1.4" height="1.4" fill="#4a4a4a"/>
<rect x="8" y="222.7" width="6" height="1" fill="#4a4a4a"/>
<rect x="10.3" y="230.6" width="1.4" height="1.4" fill="#4a4a4a"/>
<text x="0" y="0" transform="translate(15.5 239.4) rotate(-90)" text-anchor="middle" font-family="Liberation Sans" font-size="10.5" fill="#333">1</text>
<rect x="10.3" y="246.8" width="1.4" height="1.4" fill="#4a4a4a"/>
<rect x="8" y="255.1" width="6" height="1" fill="#4a4a4a"/>
<rect x="10.3" y="263.1" width="1.4" height="1.4" fill="#4a4a4a"/>
<text x="0" y="0" transform="translate(15.5 271.9) rotate(-90)" text-anchor="middle" font-family="Liberation Sans" font-size="10.5" fill="#333">2</text>
<rect x="10.3" y="279.3" width="1.4" height="1.4" fill="#4a4a4a"/>
<rect x="8" y="287.6" width="6" height="1" fill="#4a4a4a"/>
<rect x="10.3" y="295.5" width="1.4" height="1.4" fill="#4a4a4a"/>
<text x="0" y="0" transform="translate(15.5 304.3) rotate(-90)" text-anchor="middle" font-family="Liberation Sans" font-size="10.5" fill="#333">3</text>
<rect x="10.3" y="311.7" width="1.4" height="1.4" fill="#4a4a4a"/>
<rect x="8" y="320.0" width="6" height="1" fill="#4a4a4a"/>
<rect x="10.3" y="327.9" width="1.4" height="1.4" fill="#4a4a4a"/>
<text x="0" y="0" transform="translate(15.5 336.7) rotate(-90)" text-anchor="middle" font-family="Liberation Sans" font-size="10.5" fill="#333">4</text>
<rect x="10.3" y="344.1" width="1.4" height="1.4" fill="#4a4a4a"/>
<rect x="8" y="352.4" width="6" height="1" fill="#4a4a4a"/>
<rect x="10.3" y="360.3" width="1.4" height="1.4" fill="#4a4a4a"/>
<text x="0" y="0" transform="translate(15.5 369.1) rotate(-90)" text-anchor="middle" font-family="Liberation Sans" font-size="10.5" fill="#333">5</text>
<rect x="10.3" y="376.6" width="1.4" height="1.4" fill="#4a4a4a"/>
<rect x="8" y="384.9" width="6" height="1" fill="#4a4a4a"/>
<rect x="10.3" y="392.8" width="1.4" height="1.4" fill="#4a4a4a"/>
<text x="0" y="0" transform="translate(15.5 401.6) rotate(-90)" text-anchor="middle" font-family="Liberation Sans" font-size="10.5" fill="#333">6</text>
<rect x="10.3" y="409.0" width="1.4" height="1.4" fill="#4a4a4a"/>
<rect x="8" y="417.3" width="6" height="1" fill="#4a4a4a"/>
<rect x="10.3" y="425.2" width="1.4" height="1.4" fill="#4a4a4a"/>
<text x="0" y="0" transform="translate(15.5 434.0) rotate(-90)" text-anchor="middle" font-family="Liberation Sans" font-size="10.5" fill="#333">7</text>
<rect x="10.3" y="441.4" width="1.4" height="1.4" fill="#4a4a4a"/>
<rect x="8" y="449.7" width="6" height="1" fill="#4a4a4a"/>
<rect x="10.3" y="457.6" width="1.4" height="1.4" fill="#4a4a4a"/>
<text x="0" y="0" transform="translate(15.5 466.4) rotate(-90)" text-anchor="middle" font-family="Liberation Sans" font-size="10.5" fill="#333">8</text>
<rect x="10.3" y="473.8" width="1.4" height="1.4" fill="#4a4a4a"/>
<rect x="8" y="482.2" width="6" height="1" fill="#4a4a4a"/>
<rect x="10.3" y="490.1" width="1.4" height="1.4" fill="#4a4a4a"/>
<text x="0" y="0" transform="translate(15.5 498.9) rotate(-90)" text-anchor="middle" font-family="Liberation Sans" font-size="10.5" fill="#333">9</text>
<rect x="10.3" y="506.3" width="1.4" height="1.4" fill="#4a4a4a"/>
<rect x="8" y="514.6" width="6" height="1" fill="#4a4a4a"/>
<rect x="10.3" y="522.5" width="1.4" height="1.4" fill="#4a4a4a"/>
<text x="0" y="0" transform="translate(15.5 531.3) rotate(-90)" text-anchor="middle" font-family="Liberation Sans" font-size="10.5" fill="#333">10</text>
<rect x="10.3" y="538.7" width="1.4" height="1.4" fill="#4a4a4a"/>
<rect x="8" y="547.0" width="6" height="1" fill="#4a4a4a"/>
<rect x="10.3" y="554.9" width="1.4" height="1.4" fill="#4a4a4a"/>
<text x="0" y="0" transform="translate(15.5 563.7) rotate(-90)" text-anchor="middle" font-family="Liberation Sans" font-size="10.5" fill="#333">11</text>
<rect x="10.3" y="571.1" width="1.4" height="1.4" fill="#4a4a4a"/>
<rect x="8" y="579.4" width="6" height="1" fill="#4a4a4a"/>
<rect x="10.3" y="587.4" width="1.4" height="1.4" fill="#4a4a4a"/>
<text x="0" y="0" transform="translate(15.5 596.2) rotate(-90)" text-anchor="middle" font-family="Liberation Sans" font-size="10.5" fill="#333">12</text>
<rect x="10.3" y="603.6" width="1.4" height="1.4" fill="#4a4a4a"/>
<rect x="8" y="611.9" width="6" height="1" fill="#4a4a4a"/>
<rect x="10.3" y="619.8" width="1.4" height="1.4" fill="#4a4a4a"/>
<text x="0" y="0" transform="translate(15.5 628.6) rotate(-90)" text-anchor="middle" font-family="Liberation Sans" font-size="10.5" fill="#333">13</text>
<rect x="10.3" y="636.0" width="1.4" height="1.4" fill="#4a4a4a"/>
<rect x="8" y="644.3" width="6" height="1" fill="#4a4a4a"/>
<rect x="10.3" y="652.2" width="1.4" height="1.4" fill="#4a4a4a"/>
<text x="0" y="0" transform="translate(15.5 661.0) rotate(-90)" text-anchor="middle" font-family="Liberation Sans" font-size="10.5" fill="#333">14</text>
<rect x="10.3" y="668.4" width="1.4" height="1.4" fill="#4a4a4a"/>
<rect x="8" y="676.7" width="6" height="1" fill="#4a4a4a"/>
<rect x="10.3" y="684.6" width="1.4" height="1.4" fill="#4a4a4a"/>
<text x="0" y="0" transform="translate(15.5 693.5) rotate(-90)" text-anchor="middle" font-family="Liberation Sans" font-size="10.5" fill="#333">15</text>
<rect x="10.3" y="700.9" width="1.4" height="1.4" fill="#4a4a4a"/>
<rect x="8" y="709.2" width="6" height="1" fill="#4a4a4a"/>
<rect x="10.3" y="717.1" width="1.4" height="1.4" fill="#4a4a4a"/>
<text x="0" y="0" transform="translate(15.5 725.9) rotate(-90)" text-anchor="middle" font-family="Liberation Sans" font-size="10.5" fill="#333">16</text>
<rect x="10.3" y="733.3" width="1.4" height="1.4" fill="#4a4a4a"/>
<rect x="8" y="741.6" width="6" height="1" fill="#4a4a4a"/>
<rect x="10.3" y="749.5" width="1.4" height="1.4" fill="#4a4a4a"/>
<text x="0" y="0" transform="translate(15.5 758.3) rotate(-90)" text-anchor="middle" font-family="Liberation Sans" font-size="10.5" fill="#333">17</text>
<rect x="10.3" y="765.7" width="1.4" height="1.4" fill="#4a4a4a"/>
</svg>
<div id="page" class="a"></div>


<!-- document text -->
<div class="t serif" style="left:0;width:1133px;text-align:center;top:206px;font-size:16.65px">Министерство образования и науки Российской Федерации</div>
<div class="t serif" style="left:0;width:1133px;text-align:center;top:234px;font-size:16.75px">Муниципальное общеобразовательное учреждение</div>
<div class="t serif" style="left:0;width:1133px;text-align:center;top:261px;font-size:16.9px">средняя общеобразовательная школа № 2</div>
<div class="t serif" style="left:0;width:1133px;text-align:center;top:290px;font-size:16.9px">Карасукского района Новосибирской области</div>
<div class="t serif" style="left:0;width:1133px;text-align:center;top:430px;font-size:18px;font-weight:bold;letter-spacing:0.9px">РЕФЕРАТ</div>
<div class="t serif" style="left:0;width:1133px;text-align:center;top:461px;font-size:26px;font-weight:bold">Серебряный век русской поэзии</div>

<div class="a" style="left:289px;top:633px;width:166px;height:55px;background:#b5c8e6"></div>
<div class="a" style="left:289px;top:688px;width:89px;height:28px;background:#b5c8e6"></div>
<div class="t serif" style="left:290px;top:634px;font-size:16.5px;color:#1c2c48">Работу выполнила…., </div>
<div class="t serif" style="left:290px;top:662px;font-size:16.5px;color:#1c2c48">ученица 11 «Б» класса</div>
<div class="t serif" style="left:290px;top:690px;font-size:16.5px;color:#1c2c48">Учитель - …</div>
<svg class="a" style="left:289px;top:177px" width="3" height="588"><path d="M1.5 0V588" stroke="#4a4a4a" stroke-width="1.4" stroke-dasharray="1.6 1.2 1.6 4.4"/></svg>
</body></html>
